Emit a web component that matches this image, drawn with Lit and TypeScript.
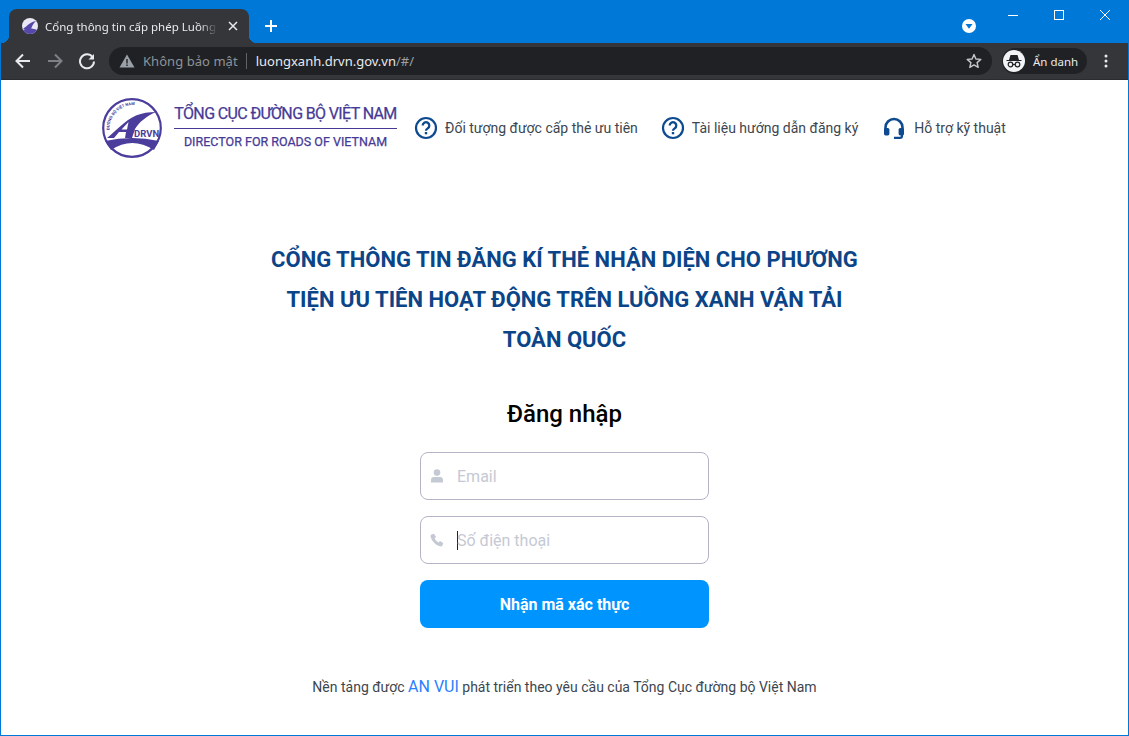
import { LitElement, html, css, svg } from "lit";
import { customElement } from "lit/decorators.js";

const logo = (size: number) => svg`
<svg viewBox="0 0 60 60" width=${size} height=${size} aria-hidden="true">
  <circle cx="30" cy="30" r="28.8" fill="#fff" stroke="#4b3d9b" stroke-width="2.2"/>
  <path id="arcT" d="M7.5 32 A24 24 0 0 1 41 9" fill="none"/>
  <path d="M5 40 C14 33 22 23 34 17.5 C40 15 47 14 54 14 C45 18 37 24 33 31 L30 40 L23 40 L24 34 L17 34 L12 40 Z" fill="#4b3d9b"/>
  <path d="M19.5 31.5 L25 31.5 L26.5 24 Z" fill="#fff"/>
  <path d="M3 43 Q30 37 57 43 L52 52 Q30 38 9 52 Z" fill="#4b3d9b"/>
  <text x="32" y="39" class="drvn">DRVN</text>
  <text class="arc"><textPath href="#arcT">ĐƯỜNG BỘ VIỆT NAM</textPath></text>
</svg>`;

const tabLogo = svg`
<svg viewBox="0 0 16 16" width="16" height="16" aria-hidden="true">
  <circle cx="8" cy="8" r="8" fill="#e9e8f4"/>
  <path d="M1 11 C5 8 8 4 14 3 C11 6 10 8 9 11 Z" fill="#5548a8"/>
  <path d="M1 12 C5 10 11 10 15 12 C13 15 10 16 8 16 C5 16 3 15 1 12 Z" fill="#5548a8"/>
</svg>`;

const question = svg`
<svg viewBox="0 0 24 24" width="24" height="24" aria-hidden="true">
  <circle cx="12" cy="12" r="10" fill="none" stroke="#0d4a8f" stroke-width="2.2"/>
  <path d="M8.7 9.6 A3.3 3.3 0 1 1 13.8 12.3 C12.7 13 12 13.4 12 14.8" fill="none" stroke="#0d4a8f" stroke-width="2.3"/>
  <rect x="10.8" y="16" width="2.4" height="2.3" fill="#0d4a8f"/>
</svg>`;

const headset = svg`
<svg viewBox="1 0 24 24" width="24" height="24" aria-hidden="true">
  <path d="M3.5 14 V11.5 A8.5 8.5 0 0 1 20.5 11.5 V14" fill="none" stroke="#0d4a8f" stroke-width="2.6"/>
  <rect x="2" y="12" width="5.4" height="7.4" rx="1.6" fill="#0d4a8f"/>
  <rect x="16.6" y="12" width="5.4" height="7.4" rx="1.6" fill="#0d4a8f"/>
  <path d="M20 18 V20 Q20 21.8 18 21.8 H12" fill="none" stroke="#0d4a8f" stroke-width="2.2"/>
</svg>`;

@customElement("app-root")
export class AppRoot extends LitElement {
  static styles = css`
    :host { display: block; height: 736px; font-family: Roboto, "Liberation Sans", sans-serif; }
    svg { display: block; flex: none; }
    .window { height: 736px; box-sizing: border-box; border: 1px solid #0078d7; border-top: 0; display: flex; flex-direction: column; overflow: hidden; background: #fff; }
    .titlebar { height: 43px; flex: none; background: #0078d7; display: flex; align-items: flex-end; padding-left: 8px; position: relative; }
    .tab { width: 240px; height: 34px; box-sizing: border-box; background: #35363a; border-radius: 8px 8px 0 0; display: flex; align-items: center; padding: 0 11px 0 13px; gap: 7px; position: relative; color: #e8eaed; font: 11.5px "Noto Sans", "Open Sans", sans-serif; }
    .tab::before, .tab::after { content: ""; position: absolute; bottom: 0; width: 8px; height: 8px; }
    .tab::before { left: -8px; background: radial-gradient(circle at 0 0, transparent 8px, #35363a 8.5px); }
    .tab::after { right: -8px; background: radial-gradient(circle at 100% 0, transparent 8px, #35363a 8.5px); }
    .tab-title { flex: 1; min-width: 0; white-space: nowrap; overflow: hidden; -webkit-mask-image: linear-gradient(90deg, #000 88%, transparent 98%); mask-image: linear-gradient(90deg, #000 88%, transparent 98%); }
    .new-tab { margin: 0 0 11px 16px; }
    .spacer { flex: 1; }
    .media { margin: 0 14px 10px 0; }
    .controls { display: flex; align-self: flex-start; }
    .ctl { width: 46px; height: 30px; display: flex; align-items: center; justify-content: center; }
    .toolbar { height: 37px; flex: none; background: #35363a; display: flex; align-items: center; box-sizing: border-box; padding: 0 0 0 13px; border-bottom: 1px solid #2b2c2f; }
    .nav { display: flex; gap: 14px; margin-right: 13px; }
    .omni { flex: none; width: 883px; height: 28px; border-radius: 14px; background: #202124; display: flex; align-items: center; box-sizing: border-box; padding: 0 10px 0 10px; font: 13px/28px "Noto Sans", "Open Sans", sans-serif; color: #9aa0a6; }
    .sec { color: #8e9398; letter-spacing: 0.05px; }
    .div { width: 1px; height: 16px; background: #5f6368; margin: 0 9px 0 8px; }
    .url { color: #e8eaed; flex: 1; }
    .url span { color: #9aa0a6; }
    .inc { margin-left: 10px; width: 85px; height: 26px; border-radius: 13px; background: #202124; display: flex; align-items: center; padding-left: 1px; box-sizing: border-box; gap: 8px; color: #e8eaed; font: 11.5px "Noto Sans", "Open Sans", sans-serif; }
    .inc-ic { width: 22px; height: 22px; border-radius: 50%; background: #f1f3f4; display: flex; align-items: center; justify-content: center; }
    .kebab { margin-left: 17px; }
    .page { flex: 1; display: flex; flex-direction: column; align-items: center; }
    .header { width: 100%; height: 96px; flex: none; display: flex; align-items: center; box-sizing: border-box; padding-left: 101px; }
    .brand { display: flex; align-items: center; gap: 12px; margin-right: 17px; }
    .drvn { font: 700 9.5px Roboto, sans-serif; fill: #4b3d9b; }
    .arc { font: 700 4px Roboto, sans-serif; fill: #4b3d9b; }
    .brand-text { color: #463a96; text-align: center; width: 223px; padding-top: 2px; }
    .b1 { font-size: 16px; font-weight: 400; -webkit-text-stroke: 0.25px #463a96; line-height: 22px; padding-bottom: 3px; border-bottom: 1px solid #463a96; white-space: nowrap; letter-spacing: -0.63px; }
    .b2 { font-size: 12.5px; font-weight: 400; -webkit-text-stroke: 0.25px #463a96; line-height: 26px; white-space: nowrap; }
    .links { display: flex; gap: 23px; }
    .link { display: flex; align-items: center; gap: 7px; font-size: 14px; color: #3c4650; white-space: nowrap; }
    .link:last-child { margin-left: 2px; }
    .title { margin: 64px 0 0; width: 600px; font-size: 22px; font-weight: 700; line-height: 40px; text-align: center; color: #0b4588; letter-spacing: 0.01px; }
    .login { margin: 36px 0 0; font-size: 24px; font-weight: 500; line-height: 36px; color: #000; }
    .form { margin-top: 20px; width: 289px; display: flex; flex-direction: column; gap: 16px; }
    .field { height: 48px; box-sizing: border-box; border: 1px solid #b4b4c4; border-radius: 8px; display: flex; align-items: center; padding-left: 9px; gap: 13px; color: #c5c9d4; font-size: 16px; }
    .caret { width: 1px; height: 19px; background: #222; margin-right: -1px; }
    .ph { display: flex; align-items: center; }
    .btn { height: 48px; border: 0; border-radius: 8px; background: #0094ff; color: #fff; font: 700 16px Roboto, sans-serif; }
    .foot { margin-top: 47px; font-size: 14px; line-height: 24px; color: #3c4650; }
    .foot b { font-weight: 400; font-size: 16px; color: #2a7fff; }
  `;

  render() {
    return html`<div class="window">
      <div class="titlebar">
        <div class="tab">
          ${tabLogo}
          <span class="tab-title">Cổng thông tin cấp phép Luồng</span>
          <svg viewBox="0 0 10 10" width="10" height="10" aria-hidden="true"><path d="M1 1 L9 9 M9 1 L1 9" stroke="#e8eaed" stroke-width="1.5"/></svg>
        </div>
        <svg class="new-tab" viewBox="0 0 12 12" width="12" height="12" aria-hidden="true"><path d="M6 0 V12 M0 6 H12" stroke="#fff" stroke-width="2"/></svg>
        <span class="spacer"></span>
        <svg class="media" viewBox="0 0 14 14" width="14" height="14" aria-hidden="true"><circle cx="7" cy="7" r="7" fill="#fff"/><path d="M3.5 5 H10.5 L7 9.8 Z" fill="#0078d7"/></svg>
        <div class="controls">
          <div class="ctl"><svg viewBox="0 0 10 10" width="10" height="10" aria-hidden="true"><path d="M0 5.5 H10" stroke="#fff"/></svg></div>
          <div class="ctl"><svg viewBox="0 0 10 10" width="10" height="10" aria-hidden="true"><rect x="0.5" y="0.5" width="9" height="9" fill="none" stroke="#fff"/></svg></div>
          <div class="ctl"><svg viewBox="0 0 10 10" width="10" height="10" aria-hidden="true"><path d="M0 0 L10 10 M10 0 L0 10" stroke="#fff"/></svg></div>
        </div>
      </div>
      <div class="toolbar">
        <div class="nav">
          <svg viewBox="0 0 18 18" width="18" height="18" aria-hidden="true"><path d="M16 9 H3 M9 2.5 L2.5 9 L9 15.5" fill="none" stroke="#e8eaed" stroke-width="2"/></svg>
          <svg viewBox="0 0 18 18" width="18" height="18" aria-hidden="true"><path d="M2 9 H15 M9 2.5 L15.5 9 L9 15.5" fill="none" stroke="#7d8084" stroke-width="2"/></svg>
          <svg viewBox="0 0 18 18" width="18" height="18" aria-hidden="true"><path d="M14.5 5 A7 7 0 1 0 16 9.5" fill="none" stroke="#e8eaed" stroke-width="2"/><path d="M16 2 V7.5 H10.5 Z" fill="#e8eaed"/></svg>
        </div>
        <div class="omni">
          <svg viewBox="0 0 16 16" width="16" height="16" style="margin-right:8px" aria-hidden="true"><path d="M8 1.5 L15.5 14.5 H0.5 Z" fill="#9aa0a6"/><path d="M8 6 V10.5 M8 11.5 V13" stroke="#202124" stroke-width="1.4"/></svg>
          <span class="sec">Không bảo mật</span><span class="div"></span>
          <span class="url">luongxanh.drvn.gov.vn<span>/#/</span></span>
          <svg viewBox="0 0 16 16" width="16" height="16" aria-hidden="true"><path d="M8 1.5 L9.9 6 L14.8 6.4 L11.1 9.6 L12.2 14.4 L8 11.9 L3.8 14.4 L4.9 9.6 L1.2 6.4 L6.1 6 Z" fill="none" stroke="#c4c7ca" stroke-width="1.4" stroke-linejoin="round"/></svg>
        </div>
        <div class="inc">
          <span class="inc-ic"><svg viewBox="0 0 18 18" width="18" height="18" aria-hidden="true"><path d="M5.5 3 H12.5 L14 8 H4 Z M1.5 8 H16.5 V9 H1.5 Z" fill="#202124"/><circle cx="5.5" cy="12.5" r="2.3" fill="none" stroke="#202124" stroke-width="1.2"/><circle cx="12.5" cy="12.5" r="2.3" fill="none" stroke="#202124" stroke-width="1.2"/><path d="M7.8 12.5 H10.2" stroke="#202124" stroke-width="1.2"/></svg></span>
          <span>Ẩn danh</span>
        </div>
        <svg class="kebab" viewBox="0 0 4 14" width="4" height="14" aria-hidden="true"><circle cx="2" cy="2" r="1.5" fill="#e8eaed"/><circle cx="2" cy="7" r="1.5" fill="#e8eaed"/><circle cx="2" cy="12" r="1.5" fill="#e8eaed"/></svg>
      </div>
      <div class="page">
        <div class="header">
          <div class="brand">
            ${logo(60)}
            <div class="brand-text">
              <div class="b1">TỔNG CỤC ĐƯỜNG BỘ VIỆT NAM</div>
              <div class="b2">DIRECTOR FOR ROADS OF VIETNAM</div>
            </div>
          </div>
          <div class="links">
            <div class="link">${question}<span>Đối tượng được cấp thẻ ưu tiên</span></div>
            <div class="link">${question}<span>Tài liệu hướng dẫn đăng ký</span></div>
            <div class="link">${headset}<span>Hỗ trợ kỹ thuật</span></div>
          </div>
        </div>
        <h1 class="title">CỔNG THÔNG TIN ĐĂNG KÍ THẺ NHẬN DIỆN CHO PHƯƠNG TIỆN ƯU TIÊN HOẠT ĐỘNG TRÊN LUỒNG XANH VẬN TẢI TOÀN QUỐC</h1>
        <h2 class="login">Đăng nhập</h2>
        <div class="form">
          <div class="field">
            <svg viewBox="0 0 14 14" width="14" height="14" aria-hidden="true"><circle cx="7" cy="3.6" r="3.3" fill="#c5c9d4"/><path d="M1 13.5 V11 Q1 8 4 8 H10 Q13 8 13 11 V13.5 Z" fill="#c5c9d4"/></svg>
            <span class="ph">Email</span>
          </div>
          <div class="field">
            <svg viewBox="0 0 14 14" width="14" height="14" aria-hidden="true"><path d="M1.5 1.5 L4 0.8 L6 4 L4.6 5.4 C5.5 7.2 6.8 8.5 8.6 9.4 L10 8 L13.2 10 L12.5 12.5 C12 13.4 11 13.6 10 13.3 C5.6 12 2 8.4 0.7 4 C0.4 3 0.6 2 1.5 1.5 Z" fill="#c5c9d4"/></svg>
            <span class="ph"><span class="caret"></span>Số điện thoại</span>
          </div>
          <button class="btn">Nhận mã xác thực</button>
        </div>
        <div class="foot">Nền tảng được <b>AN VUI</b> phát triển theo yêu cầu của Tổng Cục đường bộ Việt Nam</div>
      </div>
    </div>`;
  }
}
